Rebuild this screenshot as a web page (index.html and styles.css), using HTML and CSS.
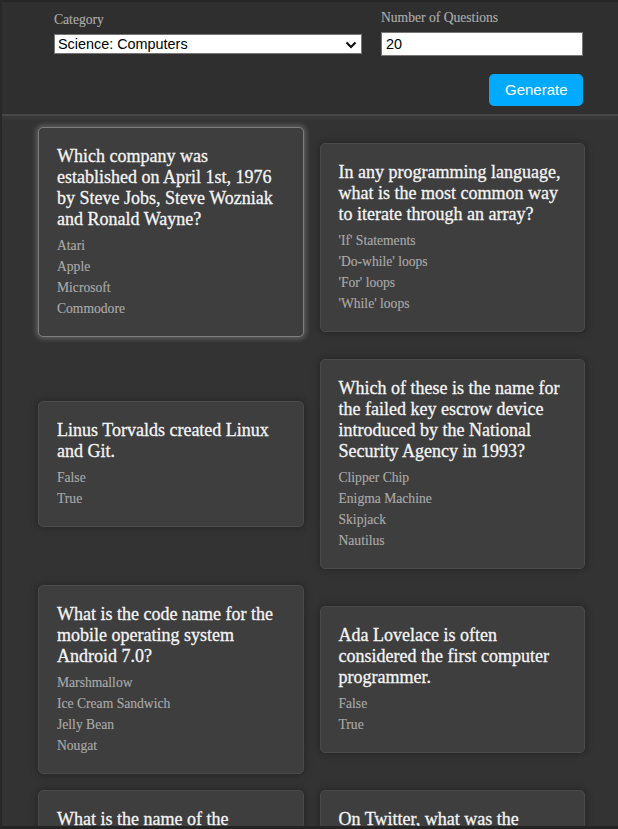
FILE: index.html
```html
<!DOCTYPE html>
<html lang="en">
<head>
<meta charset="utf-8">
<title>Flashcard Quiz</title>
<link rel="stylesheet" href="styles.css">
</head>
<body>
<header class="header">
  <form class="form">
    <div class="fields">
      <div class="group group-category">
        <label class="label" for="category">Category</label>
        <div class="select-wrap">
          <select id="category" class="select">
            <option>Science: Computers</option>
          </select>
          <svg class="chev" width="12" height="8" viewBox="0 0 12 8" aria-hidden="true"><path d="M1.5 1.5 L6 6 L10.5 1.5" fill="none" stroke="#111" stroke-width="2.2"/></svg>
        </div>
      </div>
      <div class="group group-amount">
        <label class="label" for="amount">Number of Questions</label>
        <input id="amount" class="input" type="text" value="20">
      </div>
    </div>
    <div class="actions">
      <button type="button" class="btn">Generate</button>
    </div>
  </form>
</header>

<main class="container">
  <div class="card-grid">
    <div class="card card-hover">
      <div class="question">Which company was established on April 1st, 1976 by Steve Jobs, Steve Wozniak and Ronald Wayne?</div>
      <div class="options">
        <div class="option">Atari</div>
        <div class="option">Apple</div>
        <div class="option">Microsoft</div>
        <div class="option">Commodore</div>
      </div>
    </div>
    <div class="card">
      <div class="question">In any programming language, what is the most common way to iterate through an array?</div>
      <div class="options">
        <div class="option">'If' Statements</div>
        <div class="option">'Do-while' loops</div>
        <div class="option">'For' loops</div>
        <div class="option">'While' loops</div>
      </div>
    </div>
    <div class="card">
      <div class="question">Linus Torvalds created Linux and Git.</div>
      <div class="options">
        <div class="option">False</div>
        <div class="option">True</div>
      </div>
    </div>
    <div class="card">
      <div class="question">Which of these is the name for the failed key escrow device introduced by the National Security Agency in 1993?</div>
      <div class="options">
        <div class="option">Clipper Chip</div>
        <div class="option">Enigma Machine</div>
        <div class="option">Skipjack</div>
        <div class="option">Nautilus</div>
      </div>
    </div>
    <div class="card">
      <div class="question">What is the code name for the mobile operating system Android 7.0?</div>
      <div class="options">
        <div class="option">Marshmallow</div>
        <div class="option">Ice Cream Sandwich</div>
        <div class="option">Jelly Bean</div>
        <div class="option">Nougat</div>
      </div>
    </div>
    <div class="card">
      <div class="question">Ada Lovelace is often considered the first computer programmer.</div>
      <div class="options">
        <div class="option">False</div>
        <div class="option">True</div>
      </div>
    </div>
    <div class="card">
      <div class="question">What is the name of the Microsoft virtual assistant built into Windows 10?</div>
      <div class="options">
        <div class="option">Cortana</div>
        <div class="option">Siri</div>
        <div class="option">Alexa</div>
        <div class="option">Bixby</div>
      </div>
    </div>
    <div class="card">
      <div class="question">On Twitter, what was the original character limit for a Tweet?</div>
      <div class="options">
        <div class="option">140</div>
        <div class="option">120</div>
        <div class="option">160</div>
        <div class="option">100</div>
      </div>
    </div>
  </div>
</main>
</body>
</html>
```

FILE: styles.css
```css
* { box-sizing: border-box; }

html, body {
  margin: 0;
  padding: 0;
}

body {
  background: #333333;
  font-family: "Liberation Serif", "Times New Roman", serif;
  color: #eeeeee;
}

body::after {
  content: "";
  position: fixed;
  inset: 0;
  border-top: 2px solid #262626;
  border-left: 2px solid #282828;
  border-bottom: 3px solid #232323;
  pointer-events: none;
}

.header {
  background: #2f2f2f;
  padding: 10px 35px 8px 54px;
  border-bottom: 2px solid #474747;
  box-shadow: 0 2px 6px 0 rgba(255, 255, 255, 0.05);
}

.form {
  display: flex;
  flex-direction: column;
}

.fields {
  display: flex;
  align-items: center;
  gap: 19px;
}

.group {
  display: flex;
  flex-direction: column;
}

.group-category { width: 308px; }
.group-amount { width: 202px; }

.label {
  font-family: "Liberation Serif", "Times New Roman", serif;
  font-size: 13.6px;
  line-height: 15.6px;
  color: #ababab;
  margin-bottom: 6px;
  -webkit-text-stroke: 0.15px #ababab;
}

.select-wrap {
  position: relative;
  height: 20px;
}

.select {
  -webkit-appearance: none;
  appearance: none;
  display: block;
  width: 100%;
  height: 20px;
  margin: 0;
  padding: 0 20px 0 3px;
  border: 1px solid #767676;
  border-radius: 0;
  background: #ffffff;
  color: #000000;
  font-family: "Liberation Sans", Arial, sans-serif;
  font-size: 14.4px;
  line-height: 18px;
}

.chev {
  position: absolute;
  right: 5px;
  top: 7px;
  pointer-events: none;
}

.input {
  display: block;
  width: 100%;
  height: 24px;
  margin: 0;
  padding: 0 4px;
  border: 1px solid #767676;
  border-radius: 0;
  background: #ffffff;
  color: #000000;
  font-family: "Liberation Sans", Arial, sans-serif;
  font-size: 14.4px;
  outline: none;
}

.actions {
  display: flex;
  justify-content: flex-end;
  margin-top: 18px;
}

.btn {
  background: #00aaff;
  color: #ffffff;
  border: none;
  border-radius: 5px;
  padding: 7px 16px;
  height: 32px;
  width: 94px;
  font-family: "Liberation Sans", Arial, sans-serif;
  font-size: 15px;
  line-height: 18px;
  cursor: pointer;
}

.container {
  margin: 17px 33px 16px 38px;
}

.card-grid {
  display: grid;
  grid-template-columns: 1fr 1fr;
  gap: 16px;
  align-items: center;
}

.card {
  background: #3e3e3e;
  border: 1px solid #4a4a4a;
  border-radius: 5px;
  padding: 18px 18px 19px 18px;
  box-shadow: 0 0 6px 2px rgba(0, 0, 0, 0.22);
}

.card-hover {
  transform: translateY(-6px);
  border-color: #7e7e7e;
  box-shadow: 0 0 5px 2px rgba(255, 255, 255, 0.22);
}

.question {
  font-size: 18px;
  line-height: 21px;
  color: #f4f4f4;
  -webkit-text-stroke: 0.3px #f4f4f4;
}

.options {
  margin-top: 8px;
}

.option {
  font-size: 13.6px;
  line-height: 16px;
  color: #a9a9a9;
  margin-top: 5px;
  -webkit-text-stroke: 0.15px #a9a9a9;
}

.option:first-child {
  margin-top: 0;
}
```
